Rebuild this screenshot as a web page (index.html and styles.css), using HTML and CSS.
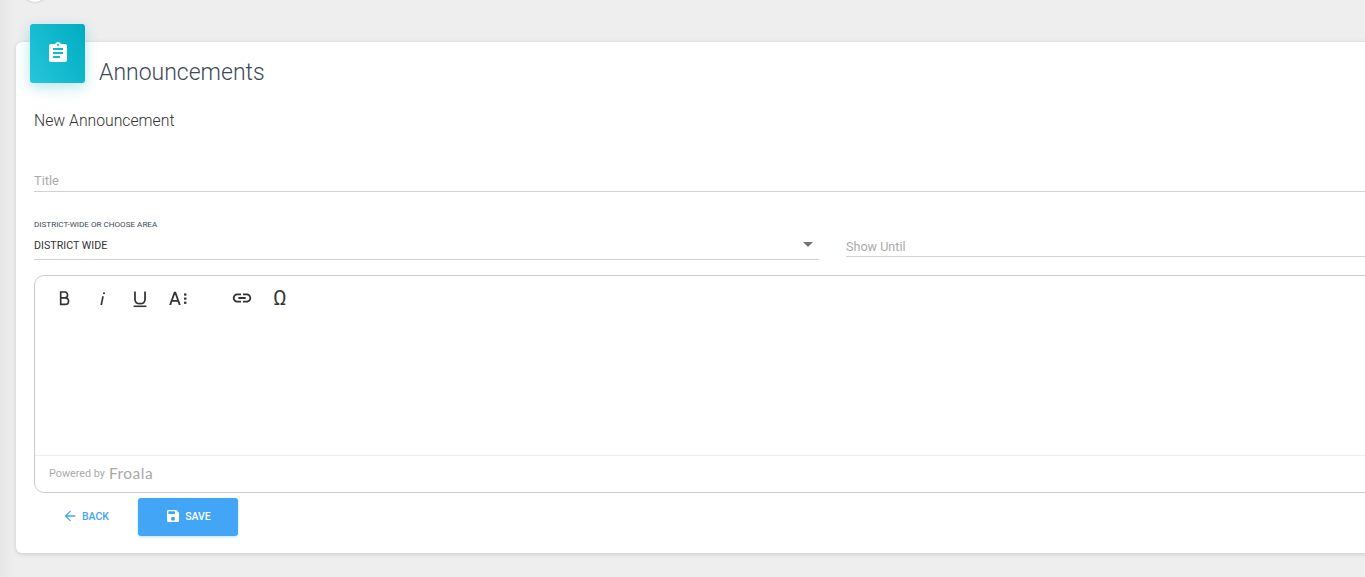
FILE: index.html
```html
<!DOCTYPE html>
<html lang="en">
<head>
<meta charset="utf-8">
<title>Announcements</title>
<link rel="stylesheet" href="styles.css">
</head>
<body>
<div class="avatar"></div>
<main class="card">
  <header class="card-head">
    <div class="badge">
      <svg viewBox="0 0 24 24" width="24" height="24"><path fill="#fff" d="M19 3h-4.180C14.400 1.840 13.300 1 12 1s-2.400.84-2.820 2H5c-1.100 0-2 .9-2 2v14c0 1.100.9 2 2 2h14c1.100 0 2-.9 2-2V5c0-1.100-.9-2-2-2zm-7 0c.55 0 1 .45 1 1s-.45 1-1 1-1-.45-1-1 .45-1 1-1zm2 14H7v-2h7v2zm3-4H7v-2h10v2zm0-4H7V7h10v2z"/></svg>
    </div>
    <h1 class="card-title">Announcements</h1>
  </header>
  <h2 class="subtitle">New Announcement</h2>
  <div class="field-title"><span class="placeholder">Title</span></div>
  <div class="row">
    <div class="select">
      <label class="select-label">DISTRICT-WIDE OR CHOOSE AREA</label>
      <div class="select-value"><span>DISTRICT WIDE</span><i class="caret"></i></div>
    </div>
    <div class="date"><span class="placeholder">Show Until</span></div>
  </div>
  <section class="editor">
    <div class="toolbar">
      <button class="tool"><svg viewBox="0 0 24 24" width="24" height="24"><path fill="none" stroke="#333" stroke-width="1.800" d="M8.400 5.500v13.500h5c2.100 0 3.600-1.500 3.600-3.700 0-2-1.500-3.400-3.600-3.400h-5 4.500c1.800 0 3-1.200 3-3.100 0-1.800-1.200-3.300-3-3.300z"/></svg></button>
      <button class="tool"><svg viewBox="0 0 24 24" width="24" height="24"><path fill="#333" d="M12.200 10h1.800l-1.900 9.500h-1.800z"/><circle fill="#333" cx="14.200" cy="6.800" r="1.200"/></svg></button>
      <button class="tool"><svg viewBox="0 0 24 24" width="24" height="24"><path fill="none" stroke="#333" stroke-width="1.900" d="M6.500 5v8c0 3.200 2.200 5.200 5.500 5.200s5.500-2 5.500-5.200V5"/><rect fill="#333" x="5" y="20.200" width="14" height="1.700"/></svg></button>
      <button class="tool"><svg viewBox="0 0 24 24" width="24" height="24"><path fill="#333" fill-rule="evenodd" d="M7.600 5.200h2.200l5.200 14.400h-2.100l-1.200-3.500H5.700l-1.200 3.500H2.400zM6.400 14.200h4.600L8.700 7.800z"/><rect fill="#333" x="18.600" y="7" width="2.600" height="2.400"/><rect fill="#333" x="18.600" y="11.500" width="2.600" height="2.400"/><rect fill="#333" x="18.600" y="16" width="2.600" height="2.400"/></svg></button>
      <button class="tool tool-gap"><svg viewBox="0 0 24 24" width="24" height="24"><path fill="#333" d="M3.900 12c0-1.710 1.390-3.100 3.100-3.100h4V7H7c-2.760 0-5 2.240-5 5s2.240 5 5 5h4v-1.900H7c-1.710 0-3.100-1.390-3.100-3.100zM8 13h8v-2H8v2zm9-6h-4v1.900h4c1.710 0 3.100 1.390 3.100 3.100s-1.390 3.100-3.100 3.100h-4V17h4c2.760 0 5-2.240 5-5s-2.240-5-5-5z"/></svg></button>
      <button class="tool"><span class="omega">Ω</span></button>
    </div>
    <div class="editor-body"></div>
    <footer class="editor-foot"><span class="powered">Powered by</span><span class="froala">Froala</span></footer>
  </section>
  <div class="actions">
    <button class="btn btn-back"><svg viewBox="0 0 24 24" width="16" height="16"><path fill="#42a5f5" d="M20 11H7.830l5.590-5.590L12 4l-8 8 8 8 1.410-1.410L7.830 13H20v-2z"/></svg>BACK</button>
    <button class="btn btn-save"><svg viewBox="0 0 24 24" width="16" height="16"><path fill="#fff" d="M17 3H5c-1.110 0-2 .9-2 2v14c0 1.100.89 2 2 2h14c1.100 0 2-.9 2-2V7l-4-4zm-5 16c-1.660 0-3-1.340-3-3s1.340-3 3-3 3 1.340 3 3-1.340 3-3 3zm3-10H5V5h10v4z"/></svg>SAVE</button>
  </div>
</main>
</body>
</html>
```

FILE: styles.css
```css
* { box-sizing: border-box; }
html, body { height: 100%; }
body {
  margin: 0;
  background: linear-gradient(90deg, #e6e6e6 0, #eeeeee 14px);
  font-family: Roboto, "Liberation Sans", sans-serif;
  color: #3c4858;
  overflow: hidden;
  padding: 42px 0 0 16px;
}
.avatar {
  position: absolute;
  left: 22px;
  top: -24px;
  width: 26px;
  height: 26px;
  border-radius: 50%;
  background: #fff;
  box-shadow: 0 0 2px rgba(0,0,0,.3);
}
.card {
  width: 1420px;
  height: 511px;
  background: #fff;
  border-radius: 6px;
  box-shadow: 0 1px 4px rgba(0,0,0,.16);
  padding: 0 18px;
}
.card-head { display: flex; height: 59px; }
.badge {
  width: 55px;
  height: 59px;
  margin: -18px 0 0 -4px;
  flex: none;
  border-radius: 3px;
  background: linear-gradient(60deg, #26c6da, #00acc1);
  box-shadow: 0 4px 14px rgba(0,172,193,.3);
  display: flex;
  align-items: center;
  justify-content: center;
  padding-bottom: 1px;
}
.card-title {
  margin: 17px 0 0 14px;
  font-size: 23px;
  line-height: 27px;
  font-weight: 300;
}
.subtitle {
  margin: 10px 0 0;
  font-size: 15.750px;
  line-height: 20px;
  font-weight: 300;
  color: #333;
}
.placeholder { color: #aaa; font-size: 12.600px; line-height: 16px; }
.field-title {
  margin-top: 40px;
  height: 21px;
  padding-top: 2px;
  border-bottom: 1px solid #d2d2d2;
}
.field-title .placeholder { display: block; font-size: 12.800px; }
.row { display: flex; margin-top: 27px; align-items: flex-start; }
.select { width: 785px; flex: none; }
.select-label {
  display: block;
  font-size: 8.100px;
  line-height: 11px;
  color: #3c4858;
}
.select-value {
  display: flex;
  justify-content: space-between;
  align-items: center;
  height: 30px;
  padding: 1px 6px 0 0;
  border-bottom: 1px solid #d2d2d2;
  font-size: 10.700px;
  color: #333;
}
.caret {
  width: 0;
  height: 0;
  margin-top: -1px;
  border-left: 5px solid transparent;
  border-right: 5px solid transparent;
  border-top: 5px solid #757575;
}
.date {
  margin: 11px 0 0 27px;
  flex: 1;
  height: 27px;
  padding-top: 6px;
  border-bottom: 1px solid #d2d2d2;
}
.editor {
  margin-top: 15px;
  height: 218px;
  border: 1px solid #ccc;
  border-radius: 10px;
  display: flex;
  flex-direction: column;
}
.toolbar { display: flex; height: 44px; padding: 3px 0 0 10px; }
.tool {
  width: 38px;
  height: 38px;
  padding: 0;
  border: 0;
  background: none;
  display: flex;
  align-items: center;
  justify-content: center;
}
.tool svg { width: 22px; height: 22px; }
.tool-gap { margin-left: 26px; }
.omega { font-size: 20px; color: #333; font-family: Roboto, sans-serif; }
.editor-body { flex: 1; }
.editor-foot {
  height: 37px;
  border-top: 1px solid #eee;
  display: flex;
  align-items: center;
  padding: 0 0 2px 14px;
  gap: 4px;
}
.powered { font-size: 10.800px; color: #aaa; }
.froala { font-family: Lato, sans-serif; font-size: 15.500px; color: #a8a8a8; letter-spacing: .5px; }
.actions { display: flex; margin-top: 5px; padding-left: 16px; }
.btn {
  height: 38px;
  border: 0;
  border-radius: 3px;
  font-family: Roboto, sans-serif;
  font-size: 10.500px;
  font-weight: 500;
  display: flex;
  align-items: center;
  justify-content: center;
  gap: 4px;
}
.btn-back { width: 88px; background: none; color: #42a5f5; padding: 0 17px 2px 0; }
.btn-save {
  width: 100px;
  background: #42a5f5;
  color: #fff;
  padding: 0 0 2px;
  box-shadow: 0 1px 3px rgba(66,165,245,.35);
}
```
